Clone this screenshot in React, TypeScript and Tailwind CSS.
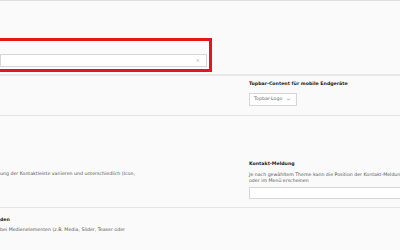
import { ChevronDown } from "lucide-react";

const App = () => {
  return (
    <div className="w-[400px] h-[250px] overflow-hidden bg-[#fafafa] border-t border-[#dedede] font-['DejaVu_Sans',sans-serif] text-[4.7px] leading-[6.5px] text-[#555]">
      <div className="h-[75px] pt-[37px] border-b-2 border-[#e8e8e8]">
        <div className="w-[212px] h-[34px] border-[3px] border-l-0 border-[#e3171b] pt-[13px]">
          <div className="w-[207px] h-[13px] bg-white border border-[#d6d6d6] flex items-center justify-end pr-[6px]">
            <span className="text-[5px] text-[#aaa] leading-none">×</span>
          </div>
        </div>
      </div>

      <div className="h-[40px] border-b border-[#e4e4e4] grid grid-cols-[249px_1fr]">
        <div />
        <div className="pt-[5px]">
          <p className="font-bold text-[#222]">Topbar-Content für mobile Endgeräte</p>
          <div className="mt-[5px] w-[48px] h-[13px] bg-white border border-[#d6d6d6] flex items-center pl-[4px] gap-[4px] text-[#666]">
            <span>Topbar-Logo</span>
            <ChevronDown className="w-[5px] h-[5px]" strokeWidth={2.5} />
          </div>
        </div>
      </div>

      <div className="h-[92px] border-b border-[#e4e4e4] grid grid-cols-[249px_1fr]">
        <div className="pt-[55px]">
          <p className="whitespace-nowrap">ung der Kontaktleiste variieren und unterschiedlich (Icon,</p>
        </div>
        <div className="pt-[45px]">
          <p className="font-bold text-[#222]">Kontakt-Meldung</p>
          <p className="mt-[4px] whitespace-nowrap">Je nach gewähltem Theme kann die Position der Kontakt-Meldung</p>
          <p>oder im Menü erscheinen</p>
          <div className="mt-[2px] h-[12px] bg-white border border-[#d6d6d6]" />
        </div>
      </div>

      <div className="grid grid-cols-[249px_1fr] pt-[9px]">
        <div>
          <p className="font-bold text-[#222]">den</p>
          <p className="mt-[3px] whitespace-nowrap">bei Medienelementen (z.B. Media, Slider, Teaser oder</p>
        </div>
        <div />
      </div>
    </div>
  );
};

export default App;
